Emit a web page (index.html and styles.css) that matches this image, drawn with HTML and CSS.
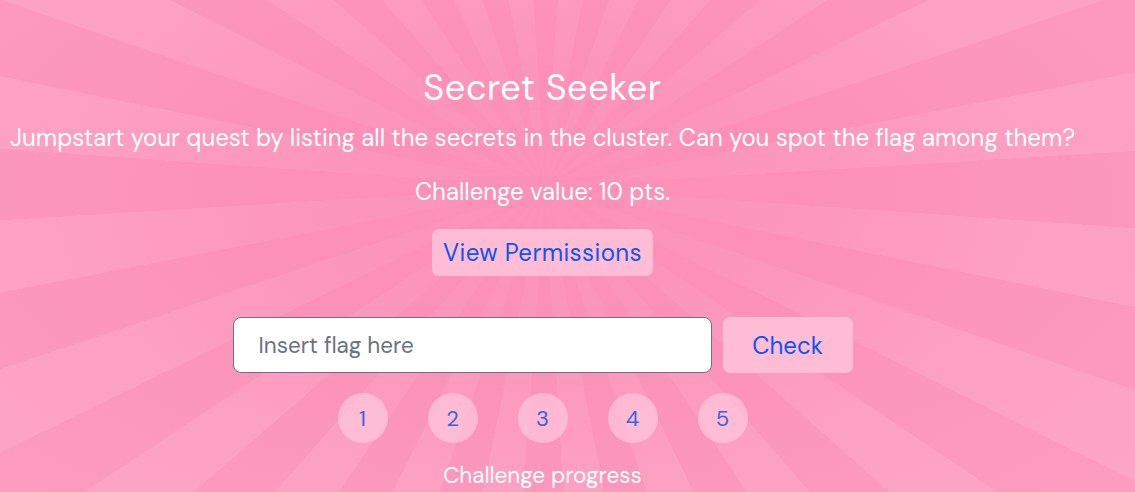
FILE: index.html
```html
<!DOCTYPE html>
<html lang="en">
<head>
<meta charset="utf-8">
<title>Secret Seeker</title>
<link rel="stylesheet" href="styles.css">
</head>
<body>
<main class="page">
  <h1 class="title">Secret Seeker</h1>
  <p class="desc">Jumpstart your quest by listing all the secrets in the cluster. Can you spot the flag among them?</p>
  <p class="value">Challenge value: 10 pts.</p>
  <button class="btn perm">View Permissions</button>
  <form class="flag-row">
    <input class="flag-input" type="text" placeholder="Insert flag here">
    <button class="btn check" type="button">Check</button>
  </form>
  <ol class="steps">
    <li class="step">1</li>
    <li class="step">2</li>
    <li class="step">3</li>
    <li class="step">4</li>
    <li class="step">5</li>
  </ol>
  <p class="progress">Challenge progress</p>
</main>
</body>
</html>
```
FILE: styles.css
```css
html, body {
  margin: 0;
  height: 100%;
}
body {
  font-family: "DM Sans", "Lato", "Noto Sans", sans-serif;
  color: #fff;
  overflow: hidden;
  background:
    radial-gradient(ellipse 460px 300px at 48% 40%, rgba(252,143,182,0.85) 0%, rgba(252,143,182,0.45) 45%, rgba(252,143,182,0) 100%),
    radial-gradient(ellipse at 48% 40%, rgba(255,255,255,0) 30%, rgba(255,240,246,0.12) 100%),
    repeating-conic-gradient(from 4deg at 48% 38%, #fd9bbf 0deg 7.5deg, #fc91b8 7.5deg 15deg);
}
.page {
  width: 1085px;
  display: flex;
  flex-direction: column;
  align-items: center;
  padding-top: 68px;
}
.title {
  margin: 0;
  font-size: 36px;
  line-height: 40px;
  font-weight: 400;
  letter-spacing: 0.6px;
}
.desc {
  margin: 16px 0 0;
  font-size: 24px;
  line-height: 28px;
  white-space: nowrap;
}
.value {
  margin: 26px 0 0;
  font-size: 24px;
  line-height: 28px;
}
.btn {
  font-family: inherit;
  border: 0;
  border-radius: 7px;
  background: #ffbcd5;
  color: #0c55ee;
  font-size: 24px;
  cursor: pointer;
}
.perm {
  margin-top: 23px;
  height: 47px;
  padding: 0 11px;
  letter-spacing: 0.4px;
}
.flag-row {
  margin: 41px 0 0;
  display: flex;
  gap: 11px;
}
.flag-input {
  box-sizing: border-box;
  width: 479px;
  height: 56px;
  border: 1px solid #6b7280;
  border-radius: 8px;
  padding: 0 25px;
  font-family: inherit;
  font-size: 22.5px;
  color: #374151;
  background: #fff;
}
.flag-input::placeholder {
  color: #6b7280;
}
.check {
  width: 130px;
  height: 56px;
}
.steps {
  list-style: none;
  margin: 20px 0 0;
  padding: 0;
  display: flex;
  gap: 40px;
}
.step {
  width: 50px;
  height: 50px;
  border-radius: 50%;
  background: rgba(255, 214, 229, 0.55);
  color: #3b62dc;
  font-size: 22px;
  display: flex;
  align-items: center;
  justify-content: center;
}
.progress {
  margin: 19px 0 0;
  font-size: 22.5px;
  line-height: 28px;
}
```
